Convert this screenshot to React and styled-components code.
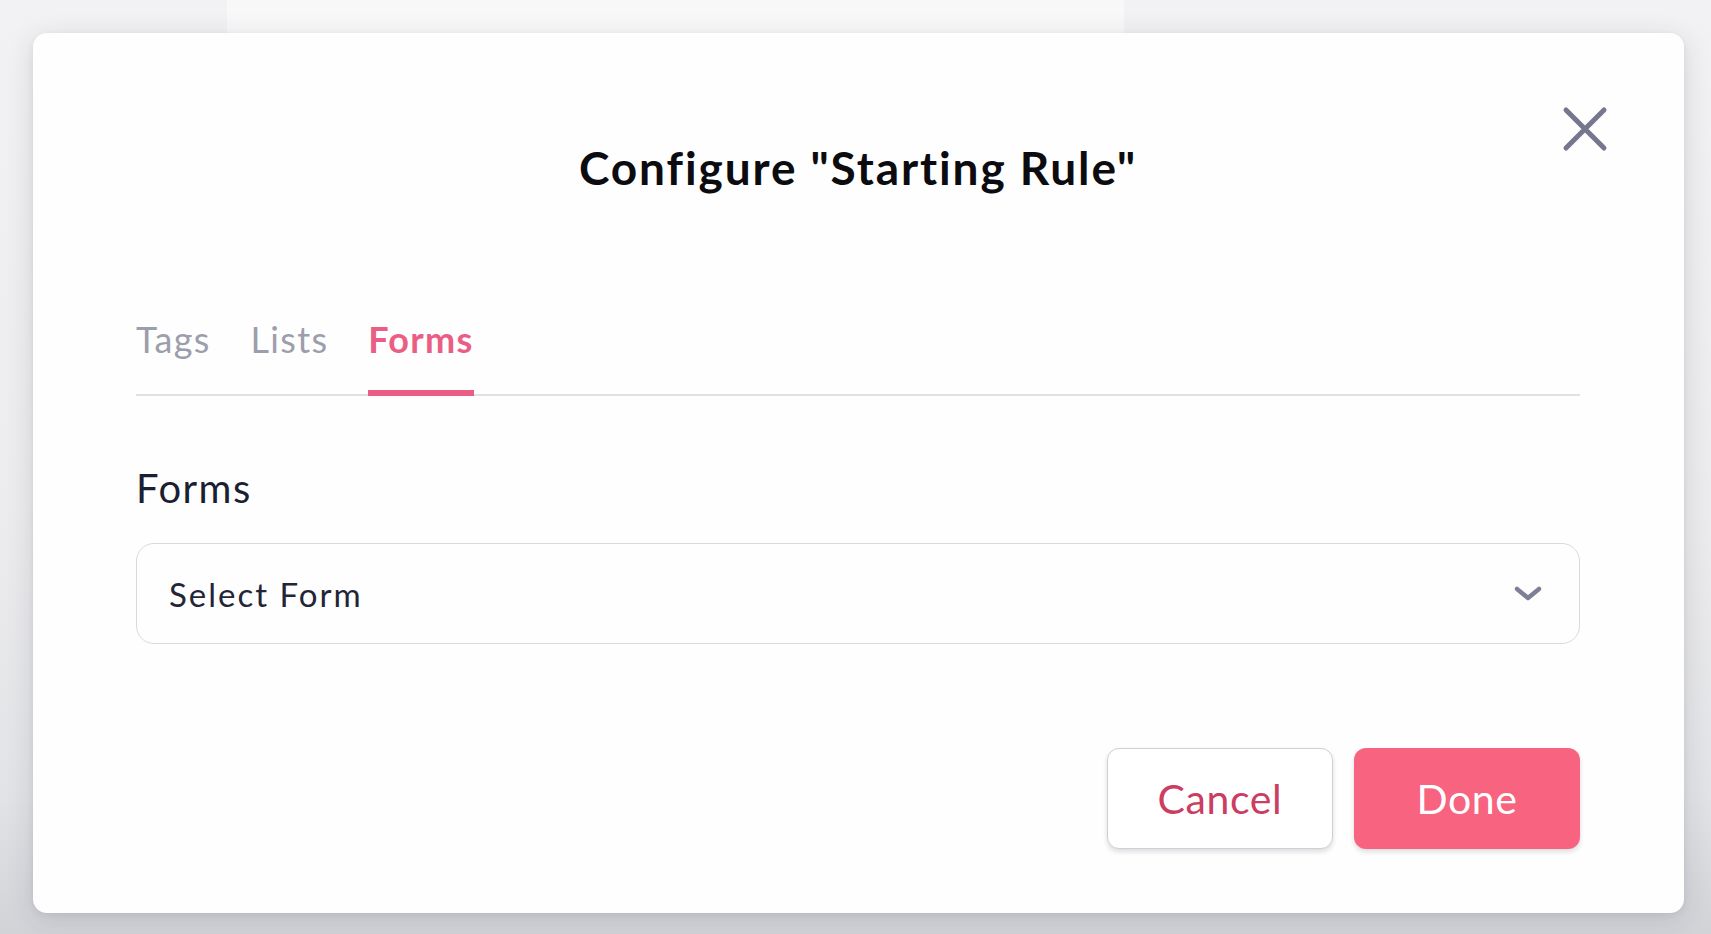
import styled, { createGlobalStyle } from 'styled-components';
import { useState } from 'react';

const GlobalStyle = createGlobalStyle`
    html, body {
        margin: 0;
        padding: 0;
        height: 100%;
    }
    body {
        background: linear-gradient(180deg, #f2f2f4 0%, #ececee 55%, #e2e3e6 85%, #d2d3d7 100%);
        font-family: Lato, "Open Sans", sans-serif;
        overflow: hidden;
    }
`

const Page = styled.div
`
    width: 1711px;
    height: 934px;
    display: flex;
    flex-direction: column;
`

const BehindStrip = styled.div
`
    margin-left: 227px;
    width: 897px;
    height: 33px;
    background: #f8f8f9;
`

const Modal = styled.div
`
    position: relative;
    margin: 0 27px 0 33px;
    height: 880px;
    box-sizing: border-box;
    background: #fefefe;
    border-radius: 14px;
    box-shadow: 0 6px 28px rgba(40, 42, 60, 0.14), 0 2px 6px rgba(40, 42, 60, 0.06);
    padding: 108px 104px 0 103px;
    display: flex;
    flex-direction: column;
`

const CloseButton = styled.button
`
    position: absolute;
    top: 72px;
    right: 75px;
    width: 48px;
    height: 48px;
    padding: 0;
    border: none;
    background: transparent;
    cursor: pointer;
    display: flex;
    align-items: center;
    justify-content: center;
`

const Title = styled.h2
`
    margin: 0;
    text-align: center;
    font-size: 46px;
    line-height: 54px;
    font-weight: 700;
    letter-spacing: 1.9px;
    color: #0c0c10;
`

const TabBar = styled.div
`
    margin-top: 123px;
    display: flex;
    gap: 40px;
    border-bottom: 2px solid #e1e1e4;
`

const Tab = styled.div
`
    font-size: 36px;
    line-height: 43px;
    letter-spacing: 1.3px;
    padding-bottom: 29px;
    margin-bottom: -2px;
    font-weight: ${p => p.$active ? 700 : 400};
    color: ${p => p.$active ? '#ea5e86' : '#9d9eab'};
    border-bottom: 6px solid ${p => p.$active ? '#ea5e86' : 'transparent'};
    cursor: pointer;
`

const Label = styled.div
`
    margin-top: 69px;
    font-size: 40px;
    line-height: 47px;
    letter-spacing: 1.5px;
    color: #1c1f33;
`

const SelectBox = styled.div
`
    margin-top: 31px;
    height: 101px;
    box-sizing: border-box;
    border: 1.5px solid #d9dade;
    border-radius: 18px;
    padding: 0 36px 0 32px;
    display: flex;
    align-items: center;
    justify-content: space-between;
    font-size: 33px;
    letter-spacing: 2px;
    color: #232536;
    cursor: pointer;
`

const Actions = styled.div
`
    margin-top: 104px;
    display: flex;
    justify-content: flex-end;
    gap: 21px;
`

const Button = styled.button
`
    width: 226px;
    height: 101px;
    border-radius: 12px;
    font-family: Lato, "Open Sans", sans-serif;
    font-size: 41px;
    letter-spacing: 0.6px;
    cursor: pointer;
    border: ${p => p.$primary ? 'none' : '1.5px solid #cfd0d5'};
    background: ${p => p.$primary ? '#f8637f' : '#ffffff'};
    color: ${p => p.$primary ? '#ffffff' : '#cc3d62'};
    box-shadow: 0 3px 5px rgba(30, 30, 50, 0.14);
`

export default function App(){

    const [tab, setTab] = useState('Forms');
    const tabs = ['Tags', 'Lists', 'Forms'];

    return (
        <Page>
        <GlobalStyle/>
        <BehindStrip/>
        <Modal>

            <CloseButton aria-label="Close">
                <svg width="48" height="48" viewBox="0 0 48 48">
                    <path d="M5 5 L43 43 M43 5 L5 43" stroke="#76768f" strokeWidth="5" strokeLinecap="round" fill="none"/>
                </svg>
            </CloseButton>

            <Title>Configure "Starting Rule"</Title>

            <TabBar>
                {tabs.map(t => (
                    <Tab key={t} $active={tab === t} onClick={() => setTab(t)}>{t}</Tab>
                ))}
            </TabBar>

            <Label>Forms</Label>
            <SelectBox>
                <span>Select Form</span>
                <svg width="30" height="18" viewBox="0 0 30 18">
                    <path d="M4 4 L15 13 L26 4" stroke="#7f8098" strokeWidth="4.5" strokeLinecap="round" strokeLinejoin="round" fill="none"/>
                </svg>
            </SelectBox>

            <Actions>
                <Button>Cancel</Button>
                <Button $primary>Done</Button>
            </Actions>

        </Modal>
        </Page>
    )
}
